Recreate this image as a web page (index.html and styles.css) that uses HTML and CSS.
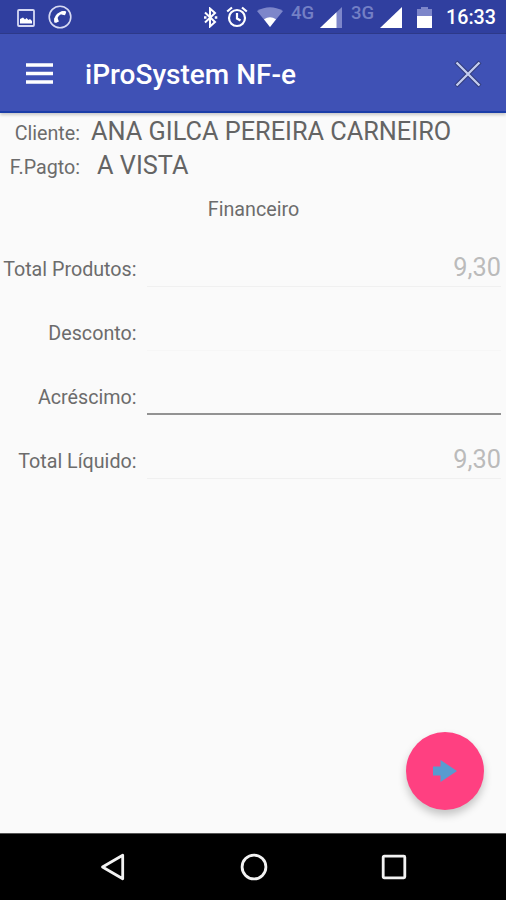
FILE: index.html
```html
<!DOCTYPE html>
<html lang="pt-BR">
<head>
<meta charset="utf-8">
<title>iProSystem NF-e</title>
<link rel="stylesheet" href="styles.css">
</head>
<body>
<div class="screen">
  <div class="status">
    <div class="status-left">
      <svg class="picture" width="18" height="18" viewBox="0 0 18 18"><rect x="1" y="1" width="16" height="16" rx="1" fill="none" stroke="#d6d9f3" stroke-width="1.8"/><path d="M3 14.500V10l3-1.500 2 2 1.500-1.500 2 2 1.500-1 2 2v2.500z" fill="#fff"/></svg>
      <svg class="call" width="24" height="24" viewBox="0 0 24 24"><circle cx="12" cy="12" r="10.800" fill="none" stroke="#d6d9f3" stroke-width="1.600"/><path d="M17.500 7.300C11.500 6.800 7 11 7.400 17.300" fill="none" stroke="#fff" stroke-width="2.500"/><path d="M13.500 6l4.800.8-1.300 3.500-3.800-.8zM6 13.500l3.500-.8 1.400 3.800-3.400 1.500z" fill="#fff"/></svg>
    </div>
    <div class="status-right">
      <svg class="bluetooth" width="15" height="21" viewBox="0 0 15 21"><path d="M2 5.500l10 9.500-5 4.500v-18l5 4.500L2 15.500" fill="none" stroke="#fff" stroke-width="2"/><path d="M1 9.200h2.500v2.500H1zM11.800 9.200h2.500v2.500h-2.500z" fill="#fff"/></svg>
      <svg class="alarm" width="22" height="22" viewBox="0 0 22 22"><circle cx="11" cy="12" r="8" fill="none" stroke="#fff" stroke-width="2.200"/><path d="M11 7v5.500l3.500 2M1.200 5.500L6 1.500M20.800 5.500L16 1.500" fill="none" stroke="#fff" stroke-width="2.200"/></svg>
      <svg class="wifi" width="26" height="20" viewBox="0 0 26 20"><path d="M0 4Q13-3.500 26 4L13 20z" fill="#7d86ca"/><path d="M7 12.200Q13 8.500 19 12.200L13 20z" fill="#fff"/></svg>
      <span class="network network-4g">4G</span>
      <svg class="signal signal-4g" width="22" height="21" viewBox="0 0 22 21"><path d="M0 21L22 0v21z" fill="#7d86ca"/><path d="M0 21L16.500 5.200V21z" fill="#fff"/></svg>
      <span class="network network-3g">3G</span>
      <svg class="signal signal-3g" width="22" height="21" viewBox="0 0 22 21"><path d="M0 21L22 0v21z" fill="#fff"/></svg>
      <svg class="battery" width="15" height="21" viewBox="0 0 15 21"><path d="M0 2h4V0h7v2h4v19H0z" fill="#7d86ca"/><path d="M0 9h15v12H0z" fill="#fff"/></svg>
      <span class="clock">16:33</span>
    </div>
  </div>
  <header class="appbar">
    <svg class="menu" width="27" height="21" viewBox="0 0 27 21"><path d="M0 2h27M0 10.500h27M0 19h27" stroke="#fff" stroke-width="3.600"/></svg>
    <h1>iProSystem NF-e</h1>
    <svg class="close" width="28" height="28" viewBox="0 0 28 28"><path d="M2 2l24 24M26 2L2 26" stroke="#303a78" stroke-width="4.200"/><path d="M2.500 2.500l23 23M25.500 2.500l-23 23" stroke="#c3cdf0" stroke-width="2.300"/></svg>
  </header>
  <main>
    <div class="info"><span class="info-label">Cliente:</span><span class="info-value">ANA GILCA PEREIRA CARNEIRO</span></div>
    <div class="info payment"><span class="info-label">F.Pagto:</span><span class="info-value">A VISTA</span></div>
    <h2>Financeiro</h2>
    <div class="field"><span class="field-label">Total Produtos:</span><span class="field-value">9,30</span></div>
    <div class="field blank"><span class="field-label">Desconto:</span><span class="field-value"></span></div>
    <div class="field active"><span class="field-label">Acréscimo:</span><span class="field-value"></span></div>
    <div class="field"><span class="field-label">Total Líquido:</span><span class="field-value">9,30</span></div>
    <div class="fab"><svg width="24" height="24" viewBox="0 0 24 24"><path d="M0 7.500h7.500V1L24 12 7.500 23v-6.500H0z" fill="#589bd0"/></svg></div>
  </main>
  <nav>
    <svg class="back" width="26" height="30" viewBox="0 0 26 30"><path d="M2.500 15L22.700 3.200v23.600z" fill="none" stroke="#f2f2f2" stroke-width="2.800" stroke-linejoin="round"/></svg>
    <svg class="home" width="28" height="28" viewBox="0 0 28 28"><circle cx="14" cy="14" r="11.900" fill="none" stroke="#f2f2f2" stroke-width="2.800"/></svg>
    <svg class="recent" width="26" height="26" viewBox="0 0 26 26"><rect x="2.200" y="2.200" width="21.600" height="21.600" rx="1" fill="none" stroke="#f2f2f2" stroke-width="2.800"/></svg>
  </nav>
</div>
</body>
</html>
```
FILE: styles.css
```css
* { box-sizing: border-box; }
body { margin: 0; font-family: Roboto, "Liberation Sans", sans-serif; background: #fafafa; }
svg { display: block; flex: none; }
.screen { display: flex; flex-direction: column; width: 506px; height: 900px; overflow: hidden; }

.status { display: flex; justify-content: space-between; height: 34px; background: #303f9f; border-bottom: 1px solid #2e3a8b; flex: none; }
.status-left, .status-right { display: flex; align-items: flex-start; }
.picture { margin: 9px 0 0 17px; }
.call { margin: 5px 0 0 13px; }
.bluetooth { margin: 7px 8px 0 0; }
.alarm { margin: 6px 9px 0 0; }
.wifi { margin: 7px 8px 0 0; }
.network { color: #7480c5; font-size: 18.5px; font-weight: 500; line-height: 20px; margin-top: 3px; width: 25px; white-space: nowrap; }
.network-4g { margin-right: 4px; }
.signal { margin-top: 7px; }
.signal-4g { margin-right: 9px; }
.network-3g { margin-right: 4px; }
.signal-3g { margin-right: 15px; }
.battery { margin: 7px 14px 0 0; }
.clock { color: #fff; font-size: 19.7px; font-weight: 500; line-height: 24px; margin: 6px 11px 0 0; width: 49px; white-space: nowrap; }

.appbar { display: flex; align-items: center; height: 79px; padding: 0 24px 0 26px; background: #3f51b5; border-bottom: 2px solid #1b3da8; box-shadow: 0 2px 3px rgba(0, 0, 0, .2); flex: none; position: relative; z-index: 1; }
.menu, .close { margin-top: 2px; }
h1 { margin: 4px 0 0 32px; flex: 1; color: #fff; font-size: 28px; font-weight: 500; line-height: 32px; white-space: nowrap; }

main { flex: 1; position: relative; background: #fafafa; color: #6c6c6c; padding-top: 2px; }
.info { display: flex; align-items: baseline; height: 34px; line-height: 34px; white-space: nowrap; }
.info-label { width: 80px; text-align: right; font-size: 19.7px; }
.info-value { margin-left: 11px; font-size: 25.3px; color: #646464; }
.payment .info-value { margin-left: 17px; }
h2 { margin: 13px 0 16px 1px; text-align: center; font-size: 19.7px; font-weight: 400; line-height: 28px; }
.field { display: grid; grid-template-columns: 136.500px 354.500px; column-gap: 10px; height: 64px; padding-top: 13px; }
.field-label { text-align: right; font-size: 19.7px; line-height: 34px; white-space: nowrap; }
.field-value { height: 41px; margin-top: -7px; padding-top: 5px; text-align: right; font-size: 25.3px; line-height: 34px; color: #bbb; border-bottom: 1px solid #f0f0f0; }
.blank .field-value { border-color: #f6f6f6; }
.active .field-value { border-bottom: 2px solid #929292; }
.fab { position: absolute; right: 22px; bottom: 23px; width: 78px; height: 78px; border-radius: 50%; background: #ff4081; display: flex; align-items: center; justify-content: center; box-shadow: 0 5px 9px rgba(0, 0, 0, .22); }

nav { display: flex; align-items: center; height: 67px; background: #000; border-top: 1px solid #555; flex: none; }
.back { margin-left: 100px; }
.home { margin-left: 114px; }
.recent { margin-left: 113px; }
```
